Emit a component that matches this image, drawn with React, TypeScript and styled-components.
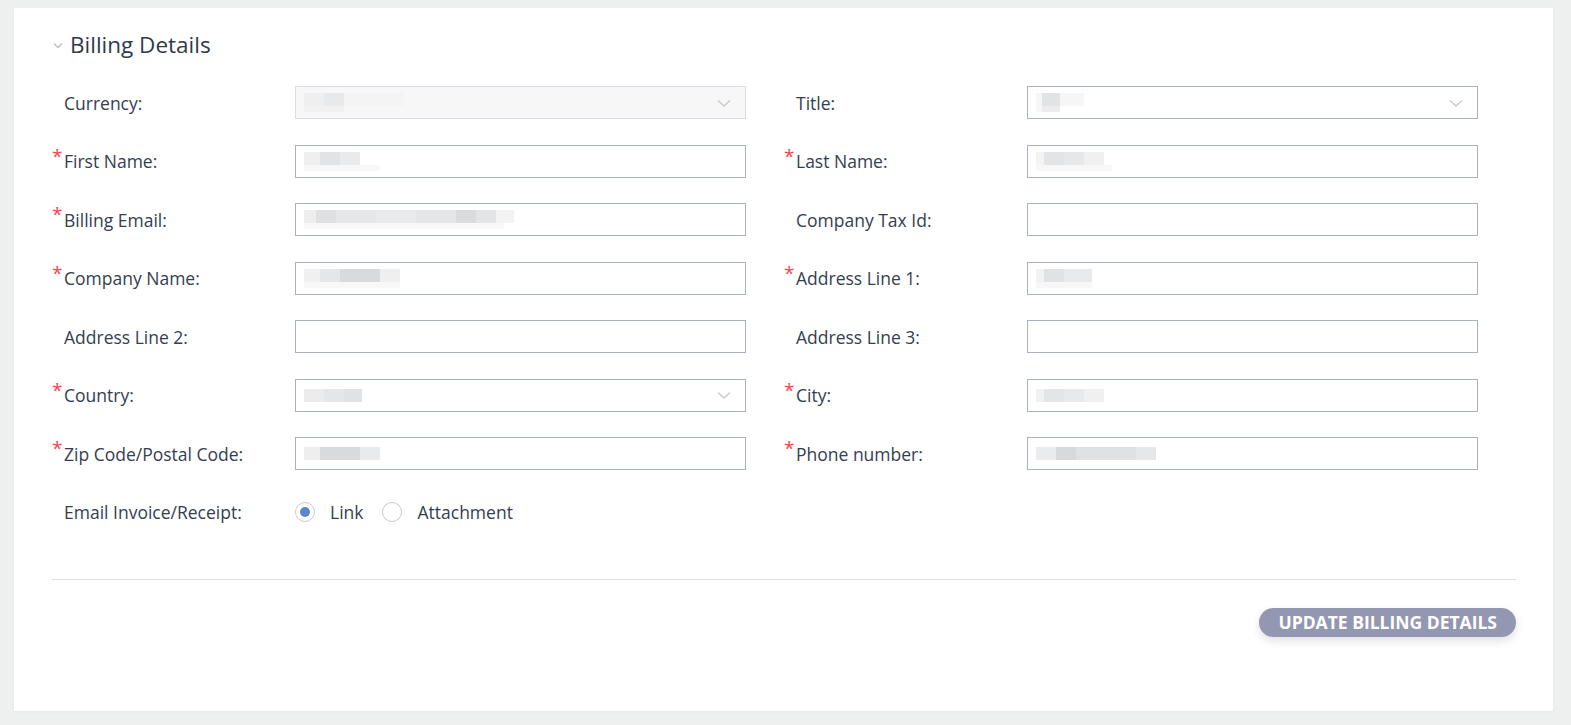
import React from 'react';
import styled, { createGlobalStyle } from 'styled-components';

const GlobalStyle = createGlobalStyle`
  html, body {
    margin: 0;
    padding: 0;
    background: #eef0ef;
    font-family: 'Open Sans', 'Noto Sans', sans-serif;
  }
`;

const Page = styled.div`
  padding: 8px 18px 14px 14px;
`;

const Card = styled.section`
  background: #ffffff;
  box-shadow: 0 1px 3px rgba(0, 0, 0, 0.04);
  padding: 22px 37px 74px 38px;
`;

const Header = styled.div`
  display: flex;
  align-items: center;
  height: 30px;
  gap: 6px;
  margin-bottom: 26px;
  color: #2f3a4b;
`;

const Title = styled.h2`
  margin: 0;
  font-size: 22.5px;
  font-weight: 400;
  line-height: 30px;
`;

const FormGrid = styled.div`
  display: grid;
  grid-template-columns: 243px 451px 38px 243px 451px;
  grid-auto-rows: 33px;
  row-gap: 25.5px;
  align-items: center;
`;

const Label = styled.label<{ $col: number }>`
  grid-column: ${(p) => p.$col};
  display: flex;
  align-items: center;
  font-size: 17.5px;
  color: #343e50;
  height: 100%;
`;

const Star = styled.span`
  width: 12px;
  flex: none;
  color: #f0484a;
  font-size: 19px;
  line-height: 1;
  align-self: flex-start;
  margin-top: 2px;
`;

const Field = styled.div<{ $col: number; $disabled?: boolean }>`
  grid-column: ${(p) => p.$col};
  box-sizing: border-box;
  height: 33px;
  border: 1px solid ${(p) => (p.$disabled ? '#d8dde6' : '#aab2c0')};
  background: ${(p) => (p.$disabled ? '#f7f7f7' : '#ffffff')};
  display: flex;
  align-items: center;
  padding: 0 14px 0 8px;
`;

const Redact = styled.div`
  display: flex;
  flex-direction: column;
  flex: 1;
`;

const BlockRow = styled.div<{ $h: number }>`
  display: flex;
  height: ${(p) => p.$h}px;
`;

const Block = styled.span`
  display: block;
  height: 100%;
`;

const Chevron = styled.svg`
  flex: none;
  width: 14px;
  height: 14px;
  margin-left: auto;
`;

const RadioGroup = styled.div`
  grid-column: 2;
  display: flex;
  align-items: center;
  font-size: 17.5px;
  color: #343e50;
`;

const Radio = styled.span<{ $checked?: boolean }>`
  box-sizing: border-box;
  width: 20px;
  height: 20px;
  border-radius: 50%;
  border: 1px solid #c5cad3;
  display: flex;
  align-items: center;
  justify-content: center;
  margin-right: 15px;
  &::after {
    content: '';
    width: 10px;
    height: 10px;
    border-radius: 50%;
    background: ${(p) => (p.$checked ? '#5c87c6' : 'transparent')};
  }
`;

const RadioText = styled.span`
  margin-right: 19px;
`;

const Divider = styled.hr`
  border: none;
  border-top: 1px solid #dde2e8;
  margin: 50px 0 28px;
`;

const Actions = styled.div`
  display: flex;
  justify-content: flex-end;
`;

const Button = styled.button`
  height: 29px;
  padding: 0 19px;
  border: none;
  border-radius: 15px;
  background: #9497b2;
  color: #ffffff;
  font-family: 'Open Sans', 'Noto Sans', sans-serif;
  font-weight: 700;
  font-size: 17.5px;
  letter-spacing: 0;
  box-shadow: 0 4px 10px rgba(0, 0, 0, 0.12);
`;

type Seg = [number, string];

const Redacted = ({ top, bottom }: { top: Seg[]; bottom?: Seg[] }) => (
  <Redact>
    <BlockRow $h={13}>
      {top.map(([w, c], i) => (
        <Block key={i} style={{ width: w, background: c }} />
      ))}
    </BlockRow>
    {bottom && (
      <BlockRow $h={6}>
        {bottom.map(([w, c], i) => (
          <Block key={i} style={{ width: w, background: c }} />
        ))}
      </BlockRow>
    )}
  </Redact>
);

const ChevronDown = () => (
  <Chevron viewBox="0 0 14 14">
    <path d="M1 4.5 L7 10 L13 4.5" fill="none" stroke="#c9cbcf" strokeWidth="1.6" />
  </Chevron>
);

type FieldDef = {
  label: string;
  required?: boolean;
  select?: boolean;
  disabled?: boolean;
  top?: Seg[];
  bottom?: Seg[];
};

const rows: [FieldDef, FieldDef | null][] = [
  [
    { label: 'Currency:', select: true, disabled: true, top: [[20, '#efefef'], [20, '#e8e9ea'], [60, '#f4f4f4']], bottom: [[40, '#f1f1f1']] },
    { label: 'Title:', select: true, top: [[6, '#f6f6f6'], [18, '#e2e3e5'], [24, '#f6f6f7']], bottom: [[6, '#f6f6f6'], [18, '#ececee']] },
  ],
  [
    { label: 'First Name:', required: true, top: [[16, '#efeff0'], [20, '#e2e3e5'], [20, '#e9eaeb']], bottom: [[76, '#f7f7f7']] },
    { label: 'Last Name:', required: true, top: [[8, '#f3f3f4'], [20, '#e3e4e6'], [20, '#e6e7e8'], [20, '#f0f0f1']], bottom: [[76, '#f7f7f7']] },
  ],
  [
    { label: 'Billing Email:', required: true, top: [[12, '#eeeeef'], [20, '#dfe0e2'], [40, '#e6e7e8'], [40, '#e9eaeb'], [40, '#e5e6e7'], [20, '#dadbdd'], [20, '#e3e4e6'], [18, '#f3f3f4']], bottom: [[200, '#f8f8f8']] },
    { label: 'Company Tax Id:' },
  ],
  [
    { label: 'Company Name:', required: true, top: [[16, '#f0f0f1'], [20, '#e5e6e7'], [40, '#d9dadc'], [20, '#efeff0']], bottom: [[96, '#f8f8f8']] },
    { label: 'Address Line 1:', required: true, top: [[8, '#f2f2f3'], [20, '#e1e2e4'], [28, '#e9eaeb']], bottom: [[56, '#f7f7f7']] },
  ],
  [{ label: 'Address Line 2:' }, { label: 'Address Line 3:' }],
  [
    { label: 'Country:', select: true, required: true, top: [[20, '#ececed'], [20, '#e5e6e7'], [18, '#e1e2e3']] },
    { label: 'City:', required: true, top: [[8, '#f1f1f2'], [20, '#e4e5e7'], [20, '#e8e9ea'], [20, '#f0f0f1']] },
  ],
  [
    { label: 'Zip Code/Postal Code:', required: true, top: [[16, '#eeeeef'], [40, '#d9dadc'], [20, '#e9eaeb']] },
    { label: 'Phone number:', required: true, top: [[20, '#eaebec'], [20, '#d8d9db'], [60, '#e0e1e3'], [20, '#e6e7e8']] },
  ],
];

const renderField = (f: FieldDef, labelCol: number, fieldCol: number) => (
  <React.Fragment key={f.label}>
    <Label $col={labelCol}>
      <Star>{f.required ? '*' : ''}</Star>
      {f.label}
    </Label>
    <Field $col={fieldCol} $disabled={f.disabled}>
      {f.top && <Redacted top={f.top} bottom={f.bottom} />}
      {f.select && <ChevronDown />}
    </Field>
  </React.Fragment>
);

export default function App() {
  return (
    <Page>
      <GlobalStyle />
      <Card>
        <Header>
          <svg width="12" height="12" viewBox="0 0 12 12">
            <path d="M2 4.5 L6 8.5 L10 4.5" fill="none" stroke="#b6bcc6" strokeWidth="1.3" />
          </svg>
          <Title>Billing Details</Title>
        </Header>
        <FormGrid>
          {rows.map(([left, right]) => (
            <React.Fragment key={left.label}>
              {renderField(left, 1, 2)}
              {right && renderField(right, 4, 5)}
            </React.Fragment>
          ))}
          <Label $col={1}>
            <Star />
            Email Invoice/Receipt:
          </Label>
          <RadioGroup>
            <Radio $checked />
            <RadioText>Link</RadioText>
            <Radio />
            <RadioText>Attachment</RadioText>
          </RadioGroup>
        </FormGrid>
        <Divider />
        <Actions>
          <Button>UPDATE BILLING DETAILS</Button>
        </Actions>
      </Card>
    </Page>
  );
}
